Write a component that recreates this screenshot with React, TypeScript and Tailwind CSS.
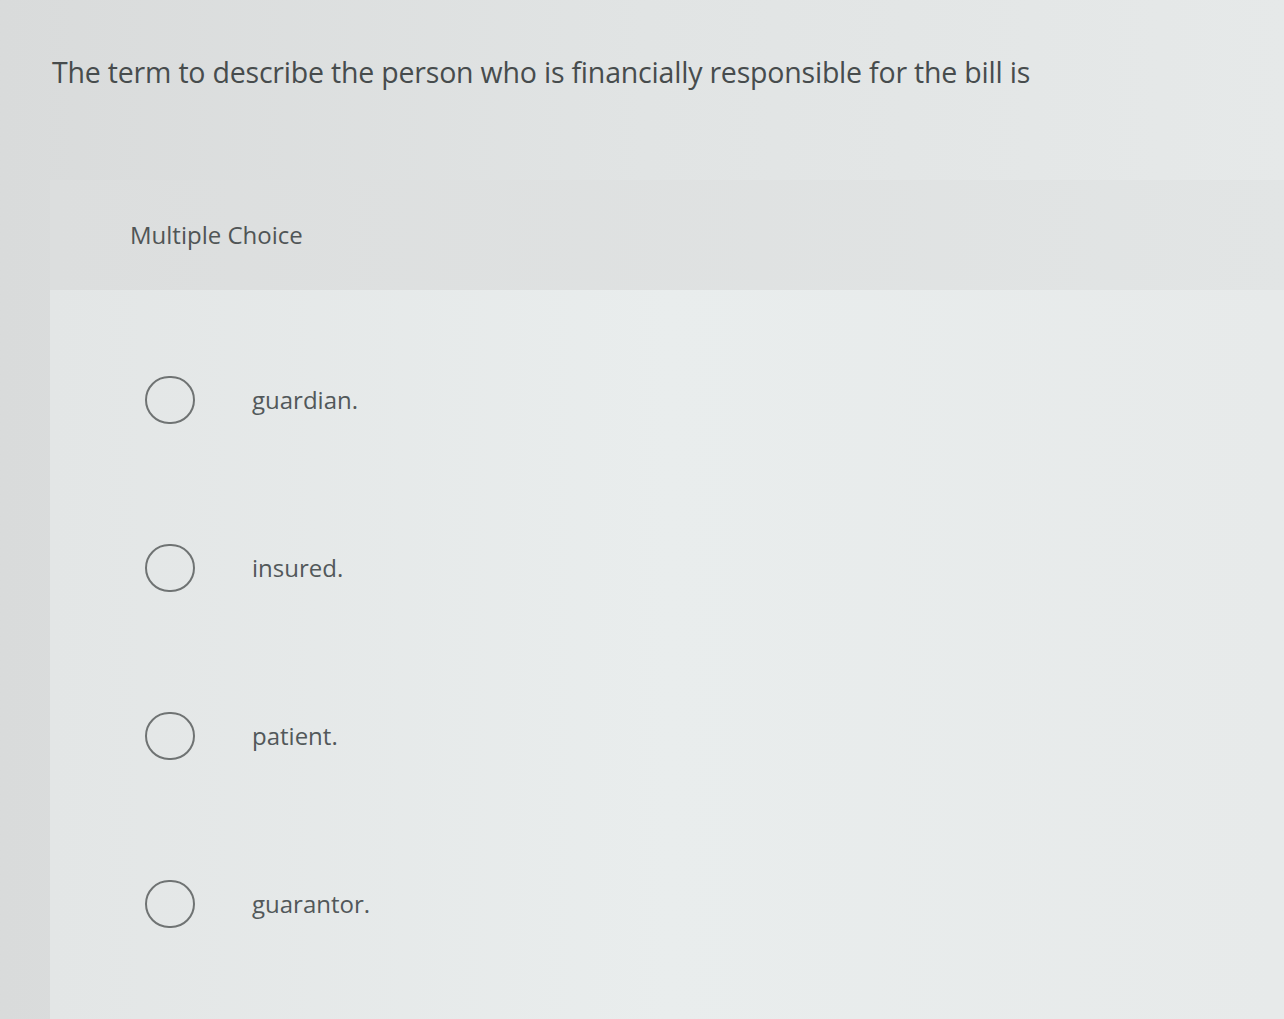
const options = ['guardian.', 'insured.', 'patient.', 'guarantor.'];

export default function App() {
  return (
    <div
      className="w-full h-[1019px] overflow-hidden bg-gradient-to-r from-[#d9dbdb] via-[#e1e4e4] to-[#e6e9e9] text-[#4b5051]"
      style={{ fontFamily: '"Open Sans", "Liberation Sans", Arial, sans-serif' }}
    >
      {/* Question */}
      <div className="pt-[52px] pl-[52px] pr-[40px] h-[180px]">
        <p className="text-[28.5px] leading-[40px] tracking-[-0.2px] text-[#474c4d]">
          The term to describe the person who is financially responsible for the bill is
        </p>
      </div>

      {/* Card */}
      <div className="ml-[50px] h-[839px] flex flex-col">
        <div className="h-[110px] shrink-0 bg-gradient-to-r from-[#dcdede] to-[#e2e5e5] flex items-center pl-[80px]">
          <span className="text-[24px] text-[#505556]">Multiple Choice</span>
        </div>

        <div className="flex-1 pt-[26px] pl-[95px] flex flex-col bg-gradient-to-r from-[#e3e6e6] via-[#e9eded] to-[#e7eaea]">
          {options.map((o) => (
            <label key={o} className="h-[168px] flex items-center cursor-pointer">
              <span className="w-[50px] h-[48px] rounded-full border-2 border-[#6f7373] shrink-0" />
              <span className="ml-[57px] text-[24px] text-[#52585a]">{o}</span>
            </label>
          ))}
        </div>
      </div>
    </div>
  );
}
